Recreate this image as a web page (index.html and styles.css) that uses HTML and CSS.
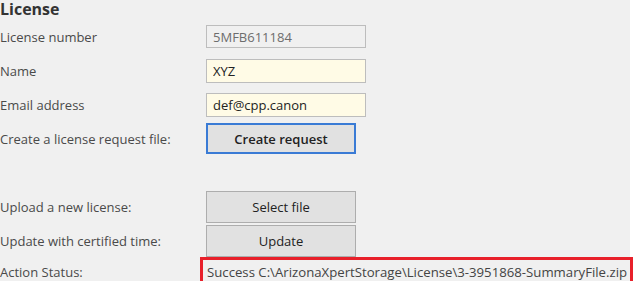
FILE: index.html
```html
<!DOCTYPE html>
<html lang="en">
<head>
  <meta charset="UTF-8">
  <title>License</title>
  <link rel="stylesheet" href="styles.css">
</head>
<body>
  <div class="panel">
    <h2 class="title">License</h2>
    <div class="form">
      <div class="row row-number">
        <label for="number">License number</label>
        <input type="text" id="number" class="field field-locked" value="5MFB611184" readonly>
      </div>
      <div class="row row-name">
        <label for="name">Name</label>
        <input type="text" id="name" class="field" value="XYZ">
      </div>
      <div class="row row-email">
        <label for="email">Email address</label>
        <input type="text" id="email" class="field" value="def@cpp.canon">
      </div>
      <div class="row row-create">
        <label>Create a license request file:</label>
        <button class="btn btn-default">Create request</button>
      </div>
      <div class="row row-select">
        <label>Upload a new license:</label>
        <button class="btn">Select file</button>
      </div>
      <div class="row row-update">
        <label>Update with certified time:</label>
        <button class="btn">Update</button>
      </div>
      <div class="row row-status">
        <label>Action Status:</label>
        <div class="status">Success C:\ArizonaXpertStorage\License\3-3951868-SummaryFile.zip</div>
      </div>
    </div>
  </div>
</body>
</html>
```

FILE: styles.css
```css
body {
  margin: 0;
  background: #fff;
  font-family: "Open Sans", "Noto Sans", sans-serif;
  font-size: 13px;
  color: #4a4a4a;
}
.panel {
  width: 630px;
  height: 281px;
  background: #f0f0f0;
}
.title {
  margin: 0;
  font-size: 16px;
  font-weight: 700;
  line-height: 18px;
  color: #333;
}
.form {
  padding-top: 7px;
}
.row {
  display: grid;
  grid-template-columns: 206px auto;
  align-items: center;
}
.row label {
  white-space: nowrap;
}
.row-name { margin-top: 11px; }
.row-email { margin-top: 10px; }
.row-create { margin-top: 6px; }
.row-select { margin-top: 37px; }
.row-update { margin-top: 2px; }
.field {
  box-sizing: border-box;
  width: 160px;
  height: 24px;
  padding: 0 6px;
  border: 1px solid #bdbdbd;
  background: #fffbe6;
  font-family: inherit;
  font-size: 13px;
  color: #222;
  outline: none;
}
.field-locked {
  height: 23px;
  background: #f0f0f0;
  color: #6d6d6d;
}
.btn {
  box-sizing: border-box;
  width: 150px;
  height: 32px;
  padding: 0;
  border: 1px solid #adadad;
  background: #e1e1e1;
  font-family: inherit;
  font-size: 13px;
  color: #222;
}
.btn-default {
  height: 31px;
  border: 2px solid #3a7bd5;
  font-weight: 600;
}
.status {
  box-sizing: border-box;
  width: 433px;
  height: 30px;
  margin-left: -6px;
  padding: 0 0 0 4px;
  border: 3px solid #e8202a;
  line-height: 24px;
  font-size: 13.2px;
  white-space: nowrap;
  color: #444;
}
```
